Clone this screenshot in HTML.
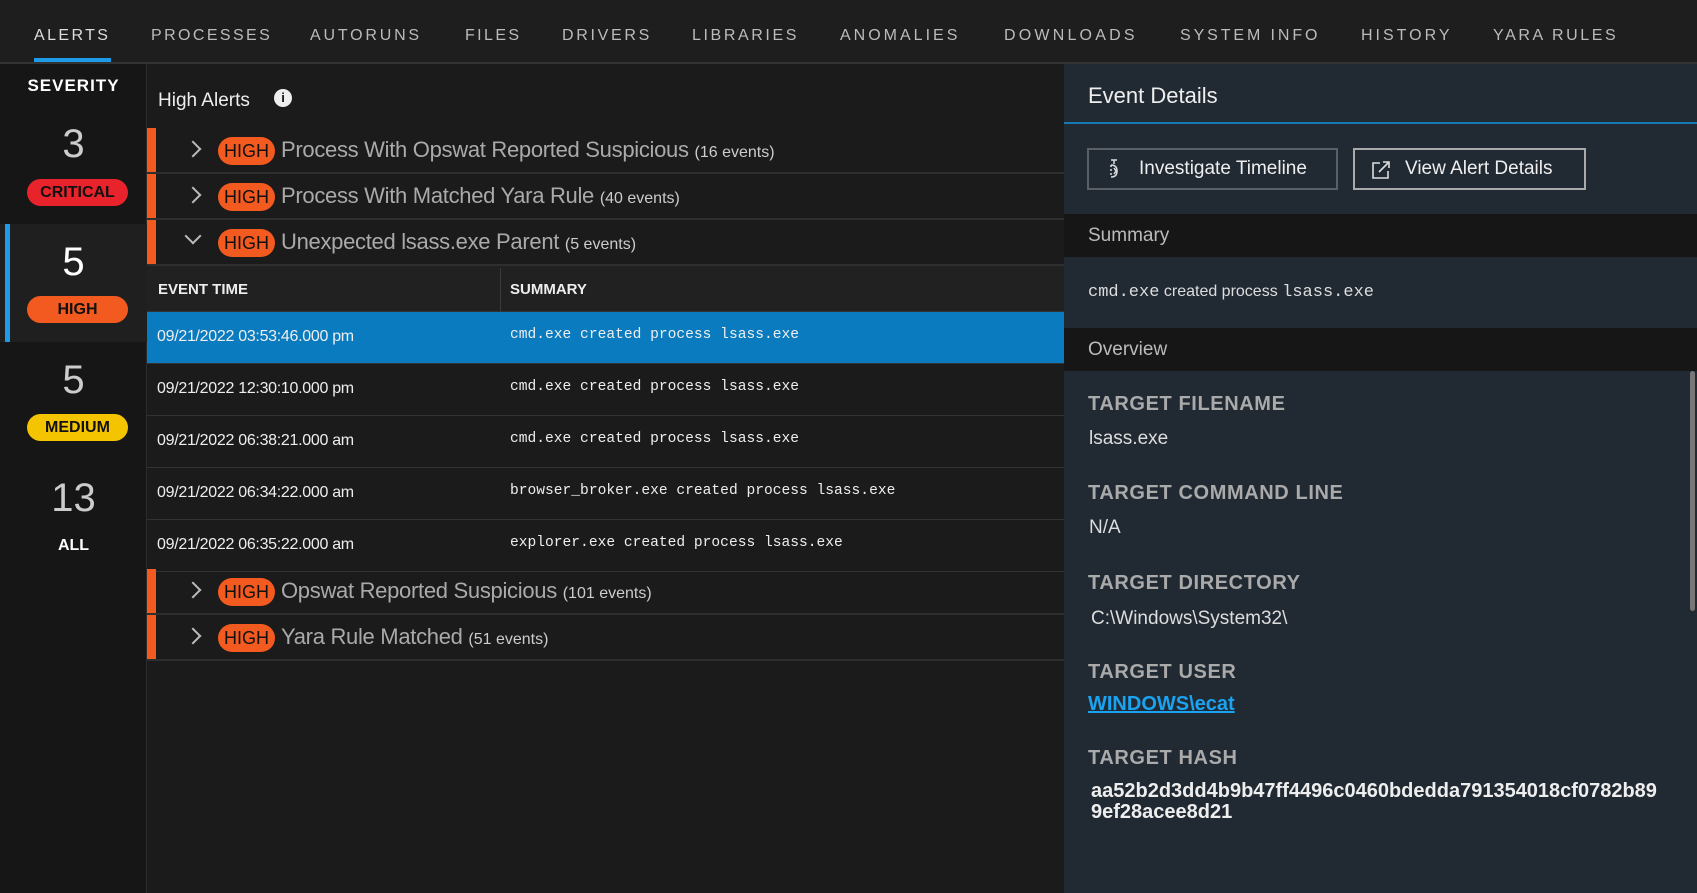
<!DOCTYPE html>
<html><head><meta charset="utf-8"><style>
*{box-sizing:border-box;margin:0;padding:0}
body{width:1697px;height:893px;background:#1b1b1b;font-family:"Liberation Sans",sans-serif;color:#ddd;position:relative;overflow:hidden}
.a{position:absolute;white-space:nowrap}
.nav{left:0;top:0;width:1697px;height:64px;background:#1e1e1e;border-bottom:2px solid #333}
.tab{top:27px;font-size:16px;letter-spacing:2.4px;color:#bbb}
.side{left:0;top:64px;width:147px;height:829px;background:#161616;border-right:1px solid #2c2c2c}
.num{width:147px;text-align:center;font-size:40px;color:#ccc}
.badge{left:27px;width:101px;height:27px;border-radius:14px;text-align:center;font-weight:bold;font-size:16px;line-height:27px;color:#111}
.main{left:147px;top:64px;width:917px;height:829px;background:#1b1b1b}
.arow{left:147px;width:917px;height:46px;border-bottom:2px solid #2e2e2e}
.arow .bar{position:absolute;left:0;top:0;width:9px;height:44px;background:#f35a1f}
.arow .chev{position:absolute;left:40px;top:15px;width:12px;height:12px;border-right:2px solid #bbb;border-top:2px solid #bbb;transform:rotate(45deg)}
.arow .chev.d{transform:rotate(135deg);top:10px}
.arow .hb{position:absolute;left:71px;top:9px;width:57px;height:28px;border-radius:14px;background:#f35a1f;color:#111;font-size:18px;text-align:center;line-height:28px}
.arow .t{position:absolute;left:134px;top:9px;font-size:22px;color:#aaa;letter-spacing:-.3px}
.arow .t small{font-size:16px;color:#ccc;letter-spacing:0}
.erow{left:147px;width:917px;height:52px;border-bottom:1px solid #333;background:#1b1b1b}
.erow .tm{position:absolute;left:10px;top:16px;font-size:16px;color:#eee;letter-spacing:-.3px}
.erow .sm{position:absolute;left:363px;top:15px;font-family:"Liberation Mono",monospace;font-size:14.6px;color:#eee}
.right{left:1064px;top:64px;width:633px;height:829px;background:#212a33}
.lbl{left:1088px;font-size:20px;font-weight:bold;color:#aaa;letter-spacing:.6px}
.val{left:1089px;font-size:19px;color:#ddd}
.btn{top:148px;height:42px;border:2px solid #666;color:#eee;font-size:19px;line-height:38px}
</style></head><body>
<div class="a nav"></div>
<div class="a tab" style="left:34px;color:#ddd">ALERTS</div>
<div class="a" style="left:34px;top:58px;width:77px;height:4px;background:#1e9be6"></div>
<div class="a tab" style="left:151px">PROCESSES</div>
<div class="a tab" style="left:310px;letter-spacing:2.8px">AUTORUNS</div>
<div class="a tab" style="left:465px">FILES</div>
<div class="a tab" style="left:562px;letter-spacing:2.7px">DRIVERS</div>
<div class="a tab" style="left:692px;letter-spacing:2.6px">LIBRARIES</div>
<div class="a tab" style="left:840px;letter-spacing:3px">ANOMALIES</div>
<div class="a tab" style="left:1004px;letter-spacing:3.2px">DOWNLOADS</div>
<div class="a tab" style="left:1180px;letter-spacing:2.9px">SYSTEM INFO</div>
<div class="a tab" style="left:1361px;letter-spacing:3px">HISTORY</div>
<div class="a tab" style="left:1493px;letter-spacing:2.6px">YARA RULES</div>

<div class="a side"></div>
<div class="a" style="left:0;top:76px;width:147px;text-align:center;font-weight:bold;font-size:17px;letter-spacing:1px;color:#fff">SEVERITY</div>
<div class="a num" style="top:122px">3</div>
<div class="a badge" style="top:179px;background:#e8232b">CRITICAL</div>
<div class="a" style="left:0;top:224px;width:147px;height:118px;background:#1f1f1f"></div>
<div class="a" style="left:5px;top:224px;width:5px;height:118px;background:#1e9be6"></div>
<div class="a num" style="top:240px;color:#fff">5</div>
<div class="a badge" style="top:296px;background:#f35a1f">HIGH</div>
<div class="a num" style="top:358px">5</div>
<div class="a badge" style="top:414px;background:#f5c400">MEDIUM</div>
<div class="a num" style="top:476px">13</div>
<div class="a" style="left:0;top:537px;width:147px;text-align:center;font-weight:bold;font-size:16px;color:#fff">ALL</div>

<div class="a main"></div>
<div class="a" style="left:158px;top:90px;font-size:19px;color:#eee">High Alerts</div>
<div class="a" style="left:274px;top:89px;width:18px;height:18px;border-radius:9px;background:#eee;color:#111;font-size:13px;font-weight:bold;text-align:center;line-height:18px">i</div>

<div class="a arow" style="top:128px"><div class="bar"></div><div class="chev"></div><div class="hb">HIGH</div><div class="t">Process With Opswat Reported Suspicious <small>(16 events)</small></div></div>
<div class="a arow" style="top:174px"><div class="bar"></div><div class="chev"></div><div class="hb">HIGH</div><div class="t">Process With Matched Yara Rule <small>(40 events)</small></div></div>
<div class="a arow" style="top:220px"><div class="bar"></div><div class="chev d"></div><div class="hb">HIGH</div><div class="t">Unexpected lsass.exe Parent <small>(5 events)</small></div></div>
<div class="a" style="left:147px;top:266px;width:917px;height:46px;background:#212121;border-bottom:1px solid #333"></div>
<div class="a" style="left:500px;top:268px;width:1px;height:44px;background:#3a3a3a"></div>
<div class="a" style="left:158px;top:281px;font-weight:bold;font-size:15px;color:#eee">EVENT TIME</div>
<div class="a" style="left:510px;top:281px;font-weight:bold;font-size:15px;color:#eee">SUMMARY</div>
<div class="a erow" style="top:312px;background:#0a7bbf"><div class="tm">09/21/2022 03:53:46.000 pm</div><div class="sm">cmd.exe created process lsass.exe</div></div>
<div class="a erow" style="top:364px"><div class="tm">09/21/2022 12:30:10.000 pm</div><div class="sm">cmd.exe created process lsass.exe</div></div>
<div class="a erow" style="top:416px"><div class="tm">09/21/2022 06:38:21.000 am</div><div class="sm">cmd.exe created process lsass.exe</div></div>
<div class="a erow" style="top:468px"><div class="tm">09/21/2022 06:34:22.000 am</div><div class="sm">browser_broker.exe created process lsass.exe</div></div>
<div class="a erow" style="top:520px"><div class="tm">09/21/2022 06:35:22.000 am</div><div class="sm">explorer.exe created process lsass.exe</div></div>
<div class="a arow" style="top:569px"><div class="bar"></div><div class="chev"></div><div class="hb">HIGH</div><div class="t">Opswat Reported Suspicious <small>(101 events)</small></div></div>
<div class="a arow" style="top:615px"><div class="bar"></div><div class="chev"></div><div class="hb">HIGH</div><div class="t">Yara Rule Matched <small>(51 events)</small></div></div>

<div class="a right"></div>
<div class="a" style="left:1088px;top:83px;font-size:22px;color:#eee">Event Details</div>
<div class="a" style="left:1064px;top:122px;width:633px;height:2px;background:#1577b3"></div>
<div class="a btn" style="left:1087px;width:251px;padding-left:50px;border-color:#5a5f66">Investigate Timeline</div>
<svg class="a" style="left:1106px;top:159px" width="16" height="20" viewBox="0 0 16 20" fill="none" stroke="#ddd" stroke-width="1.5"><path d="M5 1h6M8 1v4M5 6c4 0 6 2 6 6s-2 6-6 6" /><path d="M5 6v12" stroke-dasharray="2 2"/><path d="M8 9l2 3-2 3"/></svg>
<div class="a btn" style="left:1353px;width:233px;padding-left:50px;border-color:#aaa">View Alert Details</div>
<svg class="a" style="left:1371px;top:160px" width="20" height="20" viewBox="0 0 20 20" fill="none" stroke="#ddd" stroke-width="1.6"><path d="M9 3H2v15h15v-7"/><path d="M8 12L18 2M12 2h6v6"/></svg>
<div class="a" style="left:1064px;top:214px;width:633px;height:43px;background:#161616"></div>
<div class="a" style="left:1088px;top:225px;font-size:19px;color:#bbb">Summary</div>
<div class="a" style="left:1088px;top:283px;font-size:16px;color:#ddd"><span style="font-family:'Liberation Mono',monospace;font-size:17px">cmd.exe</span> created process <span style="font-family:'Liberation Mono',monospace;font-size:17px">lsass.exe</span></div>
<div class="a" style="left:1064px;top:328px;width:633px;height:43px;background:#161616"></div>
<div class="a" style="left:1088px;top:339px;font-size:19px;color:#bbb">Overview</div>
<div class="a" style="left:1690px;top:371px;width:5px;height:240px;background:#777;border-radius:3px"></div>
<div class="a lbl" style="top:393px">TARGET FILENAME</div>
<div class="a val" style="top:428px">lsass.exe</div>
<div class="a lbl" style="top:482px">TARGET COMMAND LINE</div>
<div class="a val" style="top:517px">N/A</div>
<div class="a lbl" style="top:572px">TARGET DIRECTORY</div>
<div class="a val" style="left:1091px;top:608px">C:\Windows\System32\</div>
<div class="a lbl" style="top:661px">TARGET USER</div>
<div class="a" style="left:1088px;top:693px;font-size:20px;font-weight:bold;color:#1aa3f0;text-decoration:underline">WINDOWS\ecat</div>
<div class="a lbl" style="top:747px">TARGET HASH</div>
<div class="a" style="left:1091px;top:781px;font-size:20px;font-weight:bold;color:#eee;line-height:21px;letter-spacing:0">aa52b2d3dd4b9b47ff4496c0460bdedda791354018cf0782b89<br>9ef28acee8d21</div>
</body></html>
